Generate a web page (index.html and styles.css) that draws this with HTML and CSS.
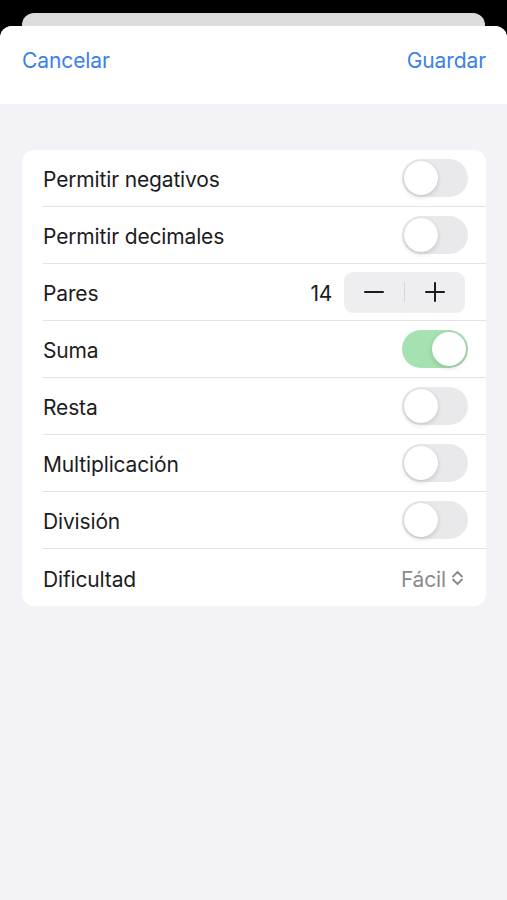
FILE: index.html
```html
<!DOCTYPE html>
<html lang="es">
<head>
  <meta charset="UTF-8">
  <meta name="viewport" content="width=device-width, initial-scale=1.0">
  <title>Ajustes</title>
  <link rel="stylesheet" href="styles.css">
</head>
<body>
  <div class="peek"></div>
  <div class="sheet">
    <div class="sheet-header">
      <span class="nav-btn">Cancelar</span>
      <span class="nav-btn">Guardar</span>
    </div>

    <div class="settings-card">
      <div class="row">
        <span class="label">Permitir negativos</span>
        <span class="toggle"><span class="knob"></span></span>
      </div>
      <div class="row">
        <span class="label">Permitir decimales</span>
        <span class="toggle"><span class="knob"></span></span>
      </div>
      <div class="row">
        <span class="label">Pares</span>
        <div class="stepper-group">
          <span class="value">14</span>
          <div class="stepper">
            <span class="step-btn">
              <svg width="20" height="20" viewBox="0 0 20 20"><path d="M1 10h18" stroke="#1c1c1e" stroke-width="2" stroke-linecap="round"/></svg>
            </span>
            <span class="step-divider"></span>
            <span class="step-btn">
              <svg width="20" height="20" viewBox="0 0 20 20"><path d="M1 10h18M10 1v18" stroke="#1c1c1e" stroke-width="2" stroke-linecap="round"/></svg>
            </span>
          </div>
        </div>
      </div>
      <div class="row">
        <span class="label">Suma</span>
        <span class="toggle on"><span class="knob"></span></span>
      </div>
      <div class="row">
        <span class="label">Resta</span>
        <span class="toggle"><span class="knob"></span></span>
      </div>
      <div class="row">
        <span class="label">Multiplicación</span>
        <span class="toggle"><span class="knob"></span></span>
      </div>
      <div class="row">
        <span class="label">División</span>
        <span class="toggle"><span class="knob"></span></span>
      </div>
      <div class="row">
        <span class="label">Dificultad</span>
        <span class="picker">Fácil
          <svg width="13" height="18" viewBox="0 0 13 18"><path d="M2 7.5l4.5-4.5 4.5 4.5M2 10.5l4.5 4.5 4.5-4.5" fill="none" stroke="#8a8a8e" stroke-width="1.8" stroke-linecap="round" stroke-linejoin="round"/></svg>
        </span>
      </div>
    </div>
  </div>
</body>
</html>
```

FILE: styles.css
```css
body {
  margin: 0;
  padding: 0;
  background-color: #000;
  font-family: Inter, "Noto Sans", sans-serif;
  color: #1c1c1e;
}

.peek {
  margin: 13px 22px 0;
  height: 14px;
  background-color: #dcdcde;
  border-radius: 12px 12px 0 0;
}

.sheet {
  margin-top: -1px;
  min-height: 874px;
  background-color: #f2f2f7;
  border-radius: 12px 12px 0 0;
  overflow: hidden;
}

.sheet-header {
  display: flex;
  justify-content: space-between;
  height: 78px;
  padding: 23px 21px 0 22px;
  box-sizing: border-box;
  background-color: #fff;
}

.nav-btn {
  font-size: 21px;
  line-height: 24px;
  color: #3a80ec;
  letter-spacing: -0.1px;
}

.settings-card {
  margin: 46px 21px 0 22px;
  background-color: #fff;
  border-radius: 12px;
  padding-left: 21px;
}

.row {
  display: flex;
  align-items: center;
  justify-content: space-between;
  height: 57px;
  padding-right: 18px;
  border-bottom: 1px solid #e3e3e6;
  box-sizing: border-box;
}

.row:last-child {
  border-bottom: none;
}

.label {
  padding-top: 3px;
  font-size: 21px;
  letter-spacing: -0.15px;
}

.toggle {
  position: relative;
  width: 66px;
  height: 38px;
  border-radius: 19px;
  background-color: #e9e9eb;
}

.toggle .knob {
  position: absolute;
  top: 2px;
  left: 2px;
  width: 34px;
  height: 34px;
  border-radius: 50%;
  background-color: #fff;
  box-shadow: 0 2px 5px rgba(0, 0, 0, 0.15), 0 0 1px rgba(0, 0, 0, 0.12);
}

.toggle.on {
  background-color: #a6e1b1;
}

.toggle.on .knob {
  left: 30px;
}

.stepper-group {
  display: flex;
  align-items: center;
  gap: 12px;
  margin-right: 3px;
}

.value {
  padding-top: 3px;
  font-size: 21px;
  letter-spacing: -0.3px;
}

.stepper {
  display: flex;
  align-items: center;
  width: 121px;
  height: 41px;
  border-radius: 9px;
  background-color: #eeeef0;
}

.step-btn {
  flex: 1;
  display: flex;
  justify-content: center;
  align-items: center;
}

.step-divider {
  width: 1px;
  height: 20px;
  background-color: #d6d6da;
}

.picker {
  display: flex;
  align-items: center;
  gap: 5px;
  margin-right: 4px;
  padding-top: 3px;
  font-size: 21px;
  letter-spacing: -0.15px;
  color: #8a8a8e;
}

.picker svg {
  margin-top: -3px;
}
```
